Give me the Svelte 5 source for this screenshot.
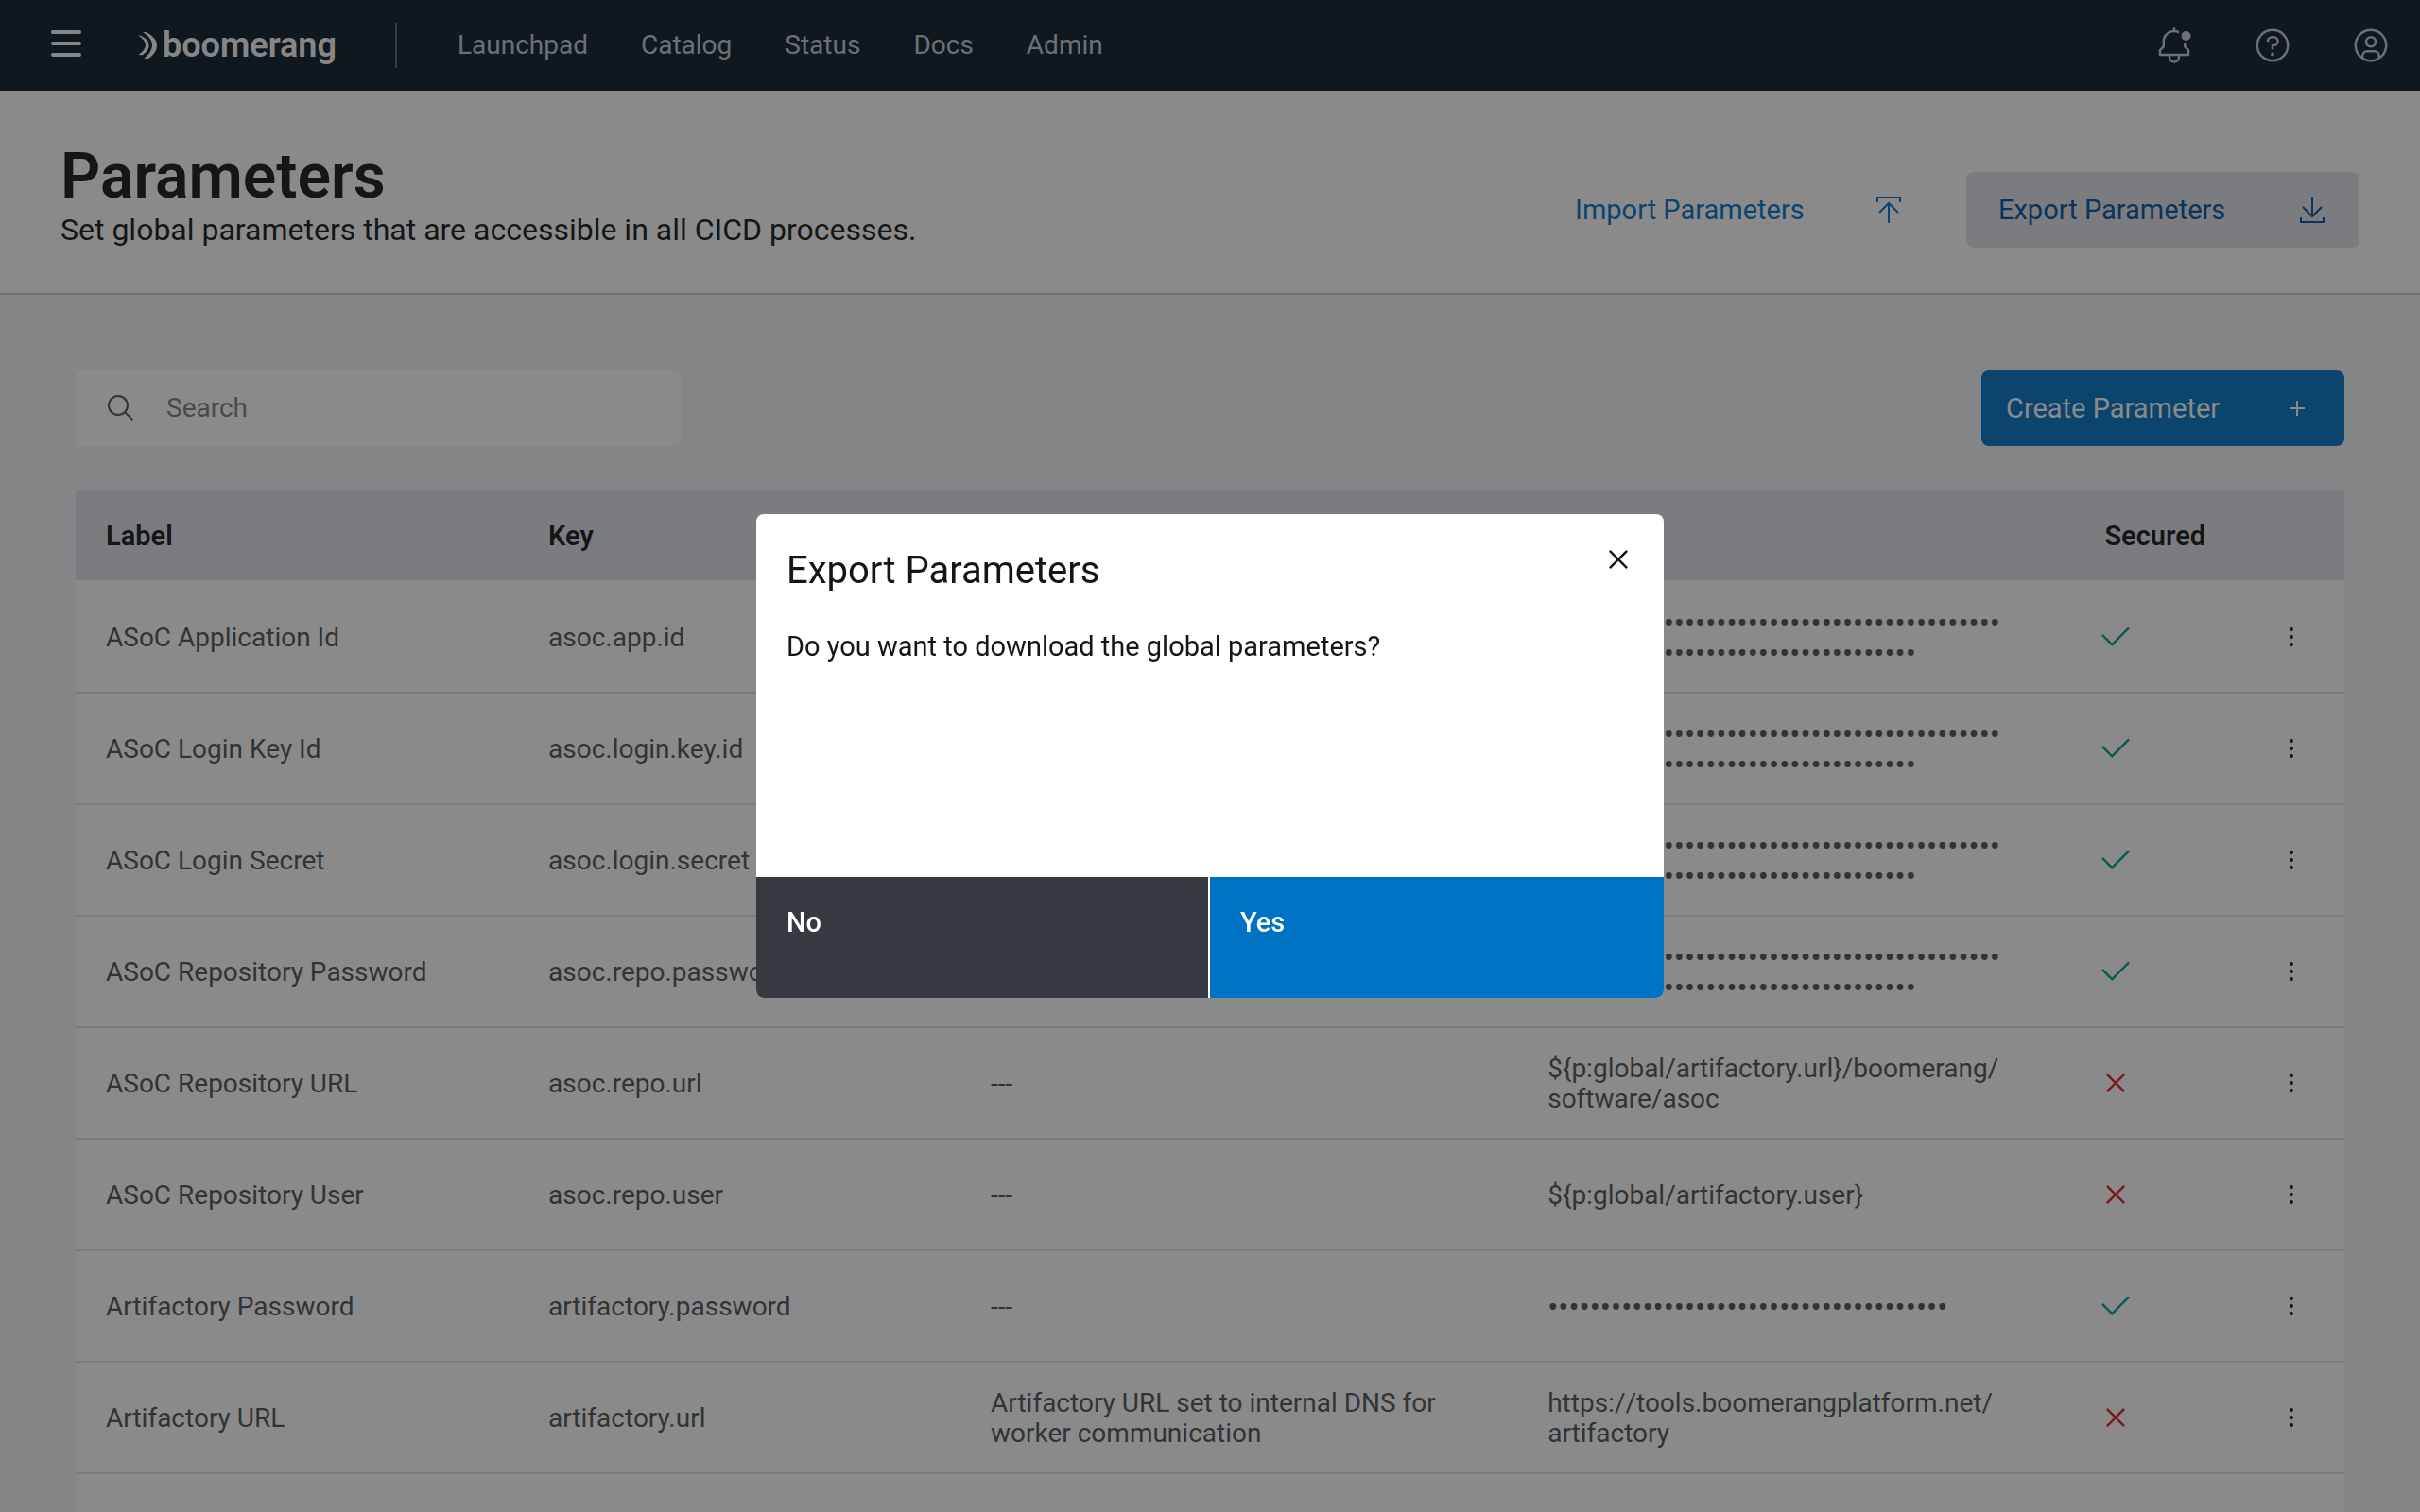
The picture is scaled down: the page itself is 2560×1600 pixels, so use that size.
<script>
  const navLinks = ['Launchpad', 'Catalog', 'Status', 'Docs', 'Admin'];
  const mask = (count) => '•'.repeat(count);

  const rows = [
    { label: 'ASoC Application Id', key: 'asoc.app.id', description: '', value: mask(78), secured: true },
    { label: 'ASoC Login Key Id', key: 'asoc.login.key.id', description: '---', value: mask(78), secured: true },
    { label: 'ASoC Login Secret', key: 'asoc.login.secret', description: '---', value: mask(78), secured: true },
    { label: 'ASoC Repository Password', key: 'asoc.repo.password', description: '---', value: mask(78), secured: true },
    { label: 'ASoC Repository URL', key: 'asoc.repo.url', description: '---', value: '${p:global/artifactory.url}/boomerang/software/asoc', secured: false },
    { label: 'ASoC Repository User', key: 'asoc.repo.user', description: '---', value: '${p:global/artifactory.user}', secured: false },
    { label: 'Artifactory Password', key: 'artifactory.password', description: '---', value: mask(38), secured: true },
    { label: 'Artifactory URL', key: 'artifactory.url', description: 'Artifactory URL set to internal DNS for worker communication', value: 'https://tools.boomerangplatform.net/artifactory', secured: false }
  ];

  // Splits a value after each slash, so that long paths break between segments.
  const segments = (value) => value.split(/(?<=\/)/);

  let open = $state(true);
  let query = $state('');
  let shown = $derived(rows.filter((r) => (r.label + r.key).toLowerCase().includes(query.toLowerCase())));
</script>

<div class="page">
  <header class="topbar">
    <button class="bare" aria-label="Menu">
      <svg width="32" height="32" viewBox="0 0 32 32" fill="currentColor">
        <rect width="32" height="4" rx="2" />
        <rect y="12" width="32" height="4" rx="2" />
        <rect y="24" width="32" height="4" rx="2" />
      </svg>
    </button>
    <a class="brand" href="#home">
      <svg width="20" height="28" viewBox="0 0 60 84" fill="currentColor" aria-hidden="true">
        <path d="M15 0H26Q60 18 60 42Q60 66 33 84H19Q45 62 45 41Q45 18 15 0Z" />
        <path d="M0 10L10 12Q35 24 35 42Q35 58 14 73L2 72Q24 56 24 42Q24 26 0 10Z" />
      </svg>
      <span>boomerang</span>
    </a>
    <nav>
      {#each navLinks as link}
        <a href={'#' + link.toLowerCase()}>{link}</a>
      {/each}
    </nav>
    <div class="tools">
      <button class="bare" aria-label="Notifications">
        <svg width="40" height="40" viewBox="0 0 32 32" fill="currentColor">
          <path d="M28.7 19.3 26 16.6V14h-2v3a1 1 0 0 0 .3.7L27 20.4V23H5v-2.600l2.700-2.700A1 1 0 0 0 8 17v-4a8 8 0 0 1 12-6.900V3.850a9.900 9.900 0 0 0-3-.8V1h-2v2.050A10 10 0 0 0 6 13v3.600L3.300 19.300A1 1 0 0 0 3 20v4a1 1 0 0 0 1 1h7v1a5 5 0 0 0 10 0v-1h7a1 1 0 0 0 1-1v-4a1 1 0 0 0-.3-.7ZM19 26a3 3 0 0 1-6 0v-1h6Z" />
          <circle cx="26" cy="8" r="4" />
        </svg>
      </button>
      <button class="bare" aria-label="Help">
        <svg width="40" height="40" viewBox="0 0 32 32" fill="currentColor">
          <path d="M16 2a14 14 0 1 0 14 14A14 14 0 0 0 16 2Zm0 26a12 12 0 1 1 12-12 12 12 0 0 1-12 12Z" />
          <circle cx="16" cy="23.5" r="1.5" />
          <path d="M17 8h-1.500A4.490 4.490 0 0 0 11 12.500V13h2v-.5A2.500 2.500 0 0 1 15.500 10H17a2.500 2.500 0 0 1 0 5h-2v4.500h2V17a4.500 4.500 0 0 0 0-9Z" />
        </svg>
      </button>
      <button class="bare" aria-label="Profile">
        <svg width="40" height="40" viewBox="0 0 32 32" fill="currentColor">
          <path d="M16 8a5 5 0 1 0 5 5 5 5 0 0 0-5-5Zm0 8a3 3 0 1 1 3-3 3 3 0 0 1-3 3Z" />
          <path d="M16 2a14 14 0 1 0 14 14A14 14 0 0 0 16 2Zm-6 24.380V25a3 3 0 0 1 3-3h6a3 3 0 0 1 3 3v1.380a11.900 11.900 0 0 1-12 0Zm13.990-1.450A5 5 0 0 0 19 20h-6a5 5 0 0 0-4.990 4.930 12 12 0 1 1 15.980 0Z" />
        </svg>
      </button>
    </div>
  </header>

  <section class="heading">
    <div>
      <h1>Parameters</h1>
      <p>Set global parameters that are accessible in all CICD processes.</p>
    </div>
    <div class="actions">
      <button class="ghost">
        Import Parameters
        <svg width="32" height="32" viewBox="0 0 32 32" fill="none" stroke="currentColor" stroke-width="2" aria-hidden="true">
          <path d="M4 8V3h24v5M16 30V9M6 19 16 9l10 10" />
        </svg>
      </button>
      <button class="ghost active" onclick={() => (open = true)}>
        Export Parameters
        <svg width="32" height="32" viewBox="0 0 32 32" fill="none" stroke="currentColor" stroke-width="2" aria-hidden="true">
          <path d="M4 24v5h24v-5M16 2v21M6 13l10 10 10-10" />
        </svg>
      </button>
    </div>
  </section>

  <main>
    <div class="toolbar">
      <label class="search">
        <svg width="32" height="32" viewBox="0 0 32 32" fill="currentColor" aria-hidden="true">
          <path d="m29 27.600-7.550-7.570a11 11 0 1 0-1.420 1.420L27.600 29ZM4 13a9 9 0 1 1 9 9 9 9 0 0 1-9-9Z" />
        </svg>
        <input type="search" placeholder="Search" aria-label="Search" bind:value={query} />
      </label>
      <button class="create">
        Create Parameter
        <svg width="32" height="32" viewBox="0 0 32 32" fill="none" stroke="currentColor" stroke-width="2" aria-hidden="true">
          <path d="M8 16h16M16 8v16" />
        </svg>
      </button>
    </div>

    <table>
      <colgroup>
        <col class="c-label" /><col class="c-key" /><col class="c-desc" /><col class="c-value" /><col class="c-secured" /><col class="c-menu" />
      </colgroup>
      <thead>
        <tr>
          <th scope="col">Label</th>
          <th scope="col">Key</th>
          <th scope="col">Description</th>
          <th scope="col">Value</th>
          <th scope="col">Secured</th>
          <td></td>
        </tr>
      </thead>
      <tbody>
        {#each shown as row (row.key)}
          <tr>
            <td>{row.label}</td>
            <td>{row.key}</td>
            <td>{row.description}</td>
            <td class="value" class:masked={row.value.startsWith('•')}>{#each segments(row.value) as part}{part}<wbr />{/each}</td>
            <td class="secured">
              {#if row.secured}
                <svg class="yes-icon" width="40" height="40" viewBox="0 0 32 32" fill="currentColor" role="img" aria-label="Secured">
                  <path d="m13 24-9-9 1.410-1.410L13 21.170 26.590 7.590 28 9 13 24Z" />
                </svg>
              {:else}
                <svg class="no-icon" width="40" height="40" viewBox="0 0 32 32" fill="currentColor" role="img" aria-label="Not secured">
                  <path d="M24 9.400 22.600 8 16 14.600 9.400 8 8 9.400l6.600 6.600L8 22.600 9.400 24l6.600-6.600 6.600 6.600 1.400-1.400-6.600-6.600L24 9.400Z" />
                </svg>
              {/if}
            </td>
            <td class="menu">
              <button class="bare kebab" aria-label={'Actions for ' + row.label}>
                <svg width="32" height="32" viewBox="0 0 32 32" fill="currentColor">
                  <circle cx="16" cy="8" r="2" /><circle cx="16" cy="16" r="2" /><circle cx="16" cy="24" r="2" />
                </svg>
              </button>
            </td>
          </tr>
        {/each}
        <tr><td colspan="6"></td></tr>
      </tbody>
    </table>
  </main>
</div>

{#if open}
  <div class="overlay">
    <div class="modal" role="dialog" aria-modal="true" aria-labelledby="modal-title">
      <div class="modal-head">
        <h2 id="modal-title">Export Parameters</h2>
        <button class="bare" aria-label="Close" onclick={() => (open = false)}>
          <svg width="40" height="40" viewBox="0 0 32 32" fill="currentColor">
            <path d="M24 9.400 22.600 8 16 14.600 9.400 8 8 9.400l6.600 6.600L8 22.600 9.400 24l6.600-6.600 6.600 6.600 1.400-1.400-6.600-6.600L24 9.400Z" />
          </svg>
        </button>
      </div>
      <p>Do you want to download the global parameters?</p>
      <div class="modal-actions">
        <button class="no" onclick={() => (open = false)}>No</button>
        <button class="yes" onclick={() => (open = false)}>Yes</button>
      </div>
    </div>
  </div>
{/if}

<style>
  :global(body) {
    margin: 0;
    background: #f2f4f8;
  }

  .page,
  .overlay {
    font-family: Roboto, 'Liberation Sans', sans-serif;
    font-size: 28px;
    line-height: 32px;
    color: #121619;
  }

  .page {
    height: 100vh;
    overflow: hidden;
    background: #f2f4f8;
  }

  button,
  input {
    font: inherit;
    color: inherit;
    border: 0;
    margin: 0;
    padding: 0;
    background: none;
  }

  button {
    cursor: pointer;
    text-align: left;
  }

  svg {
    display: block;
    flex: none;
  }

  a {
    color: inherit;
    text-decoration: none;
  }

  h1,
  h2,
  p {
    margin: 0;
  }

  .bare {
    display: block;
  }

  .topbar {
    display: flex;
    align-items: center;
    height: 96px;
    padding: 0 32px 0 54px;
    background: #0a1a28;
    color: #f7f7f7;
  }

  .brand {
    display: flex;
    align-items: center;
    gap: 6px;
    margin: 0 62px 0 60px;
    font-size: 36px;
    line-height: 48px;
    font-weight: 600;
  }

  nav {
    display: flex;
    align-items: center;
    gap: 56px;
    height: 48px;
    padding-left: 64px;
    border-left: 2px solid #5c6066;
    color: #c6c8ce;
  }

  .tools {
    display: flex;
    gap: 64px;
    margin-left: auto;
    color: #c6c8ce;
  }

  .heading {
    display: flex;
    justify-content: space-between;
    align-items: flex-end;
    padding: 55px 64px 47px;
    background: #fff;
    border-bottom: 2px solid #c4c6ce;
  }

  h1 {
    font-size: 66px;
    line-height: 72px;
    font-weight: 600;
  }

  .heading p {
    font-size: 32px;
    line-height: 40px;
  }

  .actions {
    display: flex;
    gap: 32px;
    padding-bottom: 1px;
  }

  .ghost,
  .create {
    display: flex;
    align-items: center;
    justify-content: space-between;
    height: 80px;
    border-radius: 8px;
    font-size: 29px;
  }

  .ghost {
    width: 416px;
    padding: 0 34px;
    color: #0072c3;
  }

  .ghost.active {
    background: #e0e2ea;
    color: #00539a;
  }

  .create {
    width: 384px;
    padding: 0 34px 0 26px;
    background: #0072c3;
    color: #fff;
  }

  main {
    padding: 80px 80px 0;
  }

  .toolbar {
    display: flex;
    justify-content: space-between;
    margin-bottom: 46px;
  }

  .search {
    display: flex;
    align-items: center;
    gap: 32px;
    box-sizing: border-box;
    width: 640px;
    height: 80px;
    padding: 0 32px;
    border-radius: 8px;
    background: #fff;
    color: #4d5358;
  }

  .search input {
    flex: 1;
    min-width: 0;
    outline: none;
    appearance: none;
  }

  .search input::placeholder {
    color: #7c7f84;
    opacity: 1;
  }

  table {
    width: 100%;
    table-layout: fixed;
    border-spacing: 0;
    background: #fff;
  }

  .c-label,
  .c-key {
    width: 19.5%;
  }

  .c-desc,
  .c-value {
    width: 24.55%;
  }

  .c-secured {
    width: 7%;
  }

  th,
  td {
    box-sizing: border-box;
    padding: 2px 32px 0;
    text-align: left;
    vertical-align: middle;
  }

  thead th,
  thead td {
    height: 96px;
    background: #e0e2ea;
    font-size: 29px;
    font-weight: 600;
  }

  tbody td {
    height: 118px;
    border-top: 2px solid #e0e2ea;
    color: #4d5358;
  }

  tbody tr:first-child td {
    border-top-color: #fff;
  }

  tbody .value {
    padding-right: 72px;
  }

  tbody .masked {
    padding-top: 4px;
    overflow-wrap: anywhere;
    font-size: 33px;
  }

  tbody .secured {
    padding: 0 24px;
  }

  .yes-icon {
    color: #009d9a;
  }

  .no-icon {
    color: #da1e28;
  }

  tbody .menu {
    padding: 0 40px;
    color: #121619;
  }

  .kebab {
    margin-left: auto;
  }

  .overlay {
    position: fixed;
    inset: 0;
    display: grid;
    place-items: center;
    background: rgba(22, 22, 22, 0.5);
  }

  .modal {
    display: flex;
    flex-direction: column;
    width: 960px;
    min-height: 512px;
    overflow: hidden;
    border-radius: 8px;
    background: #fff;
  }

  .modal-head {
    display: flex;
    justify-content: space-between;
    align-items: flex-start;
    padding: 28px 28px 0 32px;
  }

  h2 {
    padding-top: 8px;
    font-size: 40px;
    line-height: 48px;
    font-weight: 400;
  }

  .modal p {
    padding: 36px 32px;
    font-size: 29px;
    line-height: 40px;
  }

  .modal-actions {
    display: grid;
    grid-template-columns: 1fr 1fr;
    margin-top: auto;
  }

  .modal-actions button {
    display: flex;
    height: 128px;
    padding: 28px 32px;
    font-size: 29px;
    line-height: 40px;
    font-weight: 500;
    color: #fff;
  }

  .modal-actions .no {
    background: #343a3f;
    border-right: 2px solid #fff;
  }

  .modal-actions .yes {
    background: #0072c3;
  }
</style>
